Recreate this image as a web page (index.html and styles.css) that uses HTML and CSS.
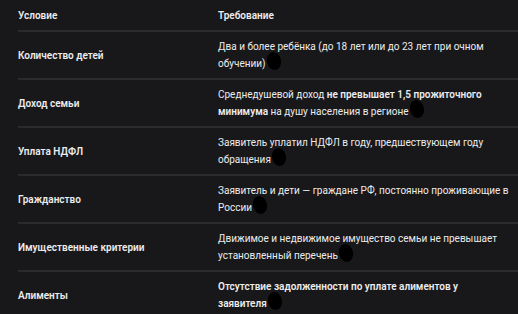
FILE: index.html
```html
<!DOCTYPE html>
<html lang="ru">
<head>
<meta charset="utf-8">
<link rel="stylesheet" href="styles.css">
</head>
<body>
<div class="wrap">
<table class="tbl">
  <colgroup><col class="col1"><col class="col2"></colgroup>
  <thead>
    <tr><th>Условие</th><th>Требование</th></tr>
  </thead>
  <tbody>
    <tr><td class="c1">Количество детей</td><td class="c2">Два и более ребёнка (до 18 лет или до 23 лет при очном<br>обучении)<span class="dot"></span></td></tr>
    <tr><td class="c1">Доход семьи</td><td class="c2">Среднедушевой доход <strong>не превышает 1,5 прожиточного<br>минимума</strong> на душу населения в регионе<span class="dot"></span></td></tr>
    <tr><td class="c1">Уплата НДФЛ</td><td class="c2">Заявитель уплатил НДФЛ в году, предшествующем году<br>обращения<span class="dot"></span></td></tr>
    <tr><td class="c1">Гражданство</td><td class="c2">Заявитель и дети — граждане РФ, постоянно проживающие в<br>России<span class="dot"></span></td></tr>
    <tr><td class="c1">Имущественные критерии</td><td class="c2">Движимое и недвижимое имущество семьи не превышает<br>установленный перечень<span class="dot"></span></td></tr>
    <tr><td class="c1">Алименты</td><td class="c2"><strong>Отсутствие задолженности по уплате алиментов у<br>заявителя</strong><span class="dot"></span></td></tr>
  </tbody>
</table>
</div>
</body>
</html>
```
FILE: styles.css
```css
html, body {
  margin: 0;
  padding: 0;
  background: #18181b;
  width: 518px;
  height: 314px;
  overflow: hidden;
}
.wrap {
  padding: 1px 0 0 18px;
}
.tbl {
  border-collapse: collapse;
  table-layout: fixed;
  width: 500px;
  font-family: Roboto, "Noto Sans", sans-serif;
  font-size: 10px;
  line-height: 17px;
  color: #ececec;
  text-align: left;
}
.col1 { width: 200px; }
.col2 { width: 300px; }
.tbl th, .tbl td {
  padding: 6px 0;
  vertical-align: middle;
}
.tbl tr {
  border-bottom: 2px solid #2b2b2f;
}
.tbl tbody tr:last-child {
  border-bottom: none;
}
.tbl th, .tbl td.c1, .tbl strong {
  font-weight: 600;
}
.tbl td.c2 {
  font-weight: 400;
}
.dot {
  display: inline-block;
  width: 14px;
  height: 18px;
  margin: -6px 0 -6px 1px;
  background: #000;
  border-radius: 50%;
  vertical-align: 3.5px;
  transform: rotate(-12deg);
}
```
